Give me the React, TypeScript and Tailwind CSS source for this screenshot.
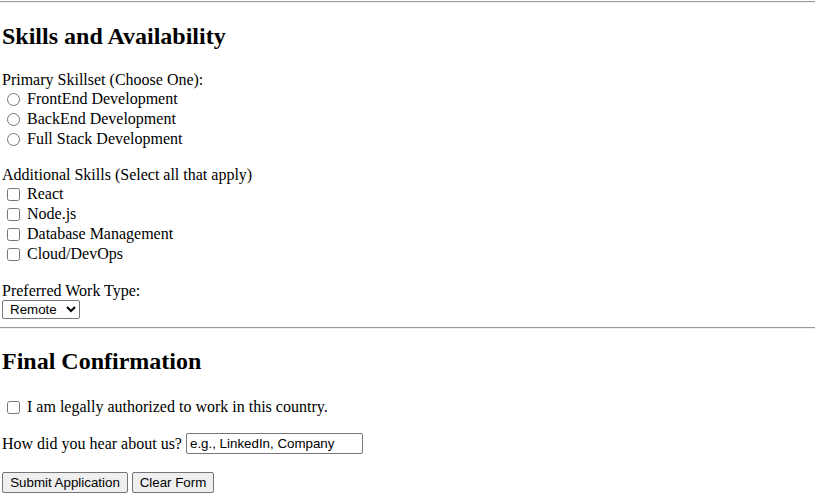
import React from "react";

const Radio = ({ label }: { label: string }) => (
  <label className="flex h-[20px] items-center">
    <input type="radio" name="primary" className="ml-[5px] mr-[7px] h-[13px] w-[13px]" />
    <span>{label}</span>
  </label>
);

const Check = ({ label }: { label: string }) => (
  <label className="flex h-[20px] items-center">
    <input type="checkbox" className="ml-[5px] mr-[7px] h-[13px] w-[13px]" />
    <span>{label}</span>
  </label>
);

const Hr = () => (
  <div className="h-[2px] w-full border-t border-b border-t-[#9a9a9a] border-b-[#eeeeee]" />
);

export default function App() {
  return (
    <div className="w-[815px] h-[500px] overflow-hidden bg-white text-black font-['Liberation_Serif','Times_New_Roman',serif] text-[16px] leading-[18px]">
      <div className="pt-[1px]">
        <Hr />
      </div>
      <div className="px-[2px]">
        <h2 className="mt-[19px] mb-[21px] text-[24px] leading-[28px] font-bold">Skills and Availability</h2>
        <div className="h-[18px] flex items-center">Primary Skillset (Choose One):</div>
        <Radio label="FrontEnd Development" />
        <Radio label="BackEnd Development" />
        <Radio label="Full Stack Development" />

        <div className="mt-[17px] h-[18px] flex items-center">Additional Skills (Select all that apply)</div>
        <Check label="React" />
        <Check label="Node.js" />
        <Check label="Database Management" />
        <Check label="Cloud/DevOps" />

        <div className="mt-[18px] h-[18px] flex items-center">Preferred Work Type:</div>
        <select
          defaultValue="Remote"
          className="block h-[19px] w-[78px] rounded-[2px] border border-[#767676] bg-white pl-[3px] font-['Liberation_Sans',Arial,sans-serif] text-[13.33px] text-black"
        >
          <option>Remote</option>
          <option>Hybrid</option>
          <option>On-site</option>
        </select>
      </div>
      <div className="pt-[8px]">
        <Hr />
      </div>
      <div className="px-[2px]">
        <h2 className="mt-[18px] mb-[22px] text-[24px] leading-[28px] font-bold">Final Confirmation</h2>
        <label className="flex h-[20px] items-center">
          <input type="checkbox" className="ml-[5px] mr-[7px] h-[13px] w-[13px]" />
          <span>I am legally authorized to work in this country.</span>
        </label>
        <div className="mt-[16px] flex h-[21px] items-center">
          <span className="mr-[4px]">How did you hear about us?</span>
          <input
            type="text"
            defaultValue="e.g., LinkedIn, Company"
            className="h-[21px] w-[177px] rounded-[2px] border border-[#767676] bg-white px-[3px] font-['Liberation_Sans',Arial,sans-serif] text-[13.33px] text-black outline-none"
          />
        </div>
        <div className="mt-[18px] flex h-[21px] items-center gap-[4px]">
          <button className="h-[21px] w-[126px] rounded-[2px] border border-[#767676] bg-[#efefef] px-[6px] font-['Liberation_Sans',Arial,sans-serif] text-[13.33px] text-black">
            Submit Application
          </button>
          <button className="h-[21px] w-[82px] rounded-[2px] border border-[#767676] bg-[#efefef] px-[6px] font-['Liberation_Sans',Arial,sans-serif] text-[13.33px] text-black">
            Clear Form
          </button>
        </div>
      </div>
    </div>
  );
}
